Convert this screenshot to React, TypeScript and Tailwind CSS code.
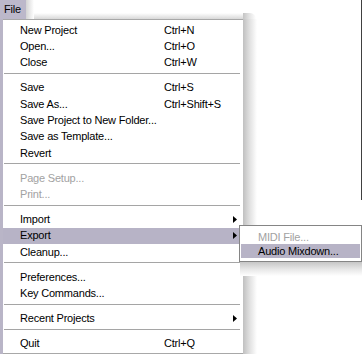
import React from "react";

type Item =
  | { sep: true }
  | { label: string; shortcut?: string; disabled?: boolean; sub?: boolean; active?: boolean };

const items: Item[] = [
  { label: "New Project", shortcut: "Ctrl+N" },
  { label: "Open...", shortcut: "Ctrl+O" },
  { label: "Close", shortcut: "Ctrl+W" },
  { sep: true },
  { label: "Save", shortcut: "Ctrl+S" },
  { label: "Save As...", shortcut: "Ctrl+Shift+S" },
  { label: "Save Project to New Folder..." },
  { label: "Save as Template..." },
  { label: "Revert" },
  { sep: true },
  { label: "Page Setup...", disabled: true },
  { label: "Print...", disabled: true },
  { sep: true },
  { label: "Import", sub: true },
  { label: "Export", sub: true, active: true },
  { label: "Cleanup..." },
  { sep: true },
  { label: "Preferences..." },
  { label: "Key Commands..." },
  { sep: true },
  { label: "Recent Projects", sub: true },
  { sep: true },
  { label: "Quit", shortcut: "Ctrl+Q" },
];

function Arrow() {
  return (
    <svg width="4" height="7" viewBox="0 0 4 7" className="block">
      <path d="M0 0 L4 3.5 L0 7 Z" fill="#000" />
    </svg>
  );
}

function MenuRow({ item }: { item: Extract<Item, { label: string }> }) {
  return (
    <div
      className={`flex h-[16.3px] items-center pl-[17px] pr-[6px] whitespace-nowrap ${
        item.active ? "bg-[#b7b3c6]" : ""
      } ${item.disabled ? "text-[#a2a2a2]" : "text-black"}`}
    >
      <span className="w-[144px]">{item.label}</span>
      {item.shortcut && <span>{item.shortcut}</span>}
      {item.sub && (
        <span className="ml-auto">
          <Arrow />
        </span>
      )}
    </div>
  );
}

export default function App() {
  return (
    <div
      className="relative flex h-[354px] w-[362px] flex-col overflow-hidden bg-white text-[11px] leading-none tracking-[-0.2px]"
      style={{ fontFamily: '"Liberation Sans", Arial, sans-serif' }}
    >
      {/* menu bar strip */}
      <div className="flex h-[19px] shrink-0">
        <div className="flex w-[26px] items-center bg-[#bcb8ca] pl-[4px] text-black">File</div>
        <div className="relative flex w-[217px] flex-col justify-end">
          <div className="absolute left-0 top-0 h-full w-[8px] bg-linear-to-r from-[#d4d4d4] to-white" />
          <div className="h-[6px] bg-linear-to-b from-white to-[#d8d8d8]" />
        </div>
        <div className="mt-[13px] h-[6px] w-[13px] rounded-tr-[7px] bg-linear-to-r from-[#c4c4c4] via-[#e4e4e4] to-white" />
        <div className="flex flex-1 justify-end">
          <div className="h-[200px] w-px bg-[#404040]" />
        </div>
      </div>

      {/* menu body */}
      <div className="flex flex-1">
        <div className="w-[3px] bg-[#b9b5c7]" />
        <div className="w-[240px] border-y border-[#a8a8a8] bg-white pt-[2px]">
          {items.map((it, i) =>
            "sep" in it ? (
              <div key={i} className="h-[8.8px] pl-[1px] pr-[3px] pt-[2px]">
                <div className="h-px bg-[#a5a5a5]" />
              </div>
            ) : (
              <MenuRow key={i} item={it} />
            )
          )}
        </div>
        <div className="w-[14px] bg-linear-to-r from-[#c0c0c0] via-[#e2e2e2] to-white" />
        <div className="flex-1" />
      </div>

      {/* export submenu */}
      <div className="absolute left-[239px] top-[225px] w-[123px] border border-[#858585] bg-white px-px pb-[3px] pt-[4px]">
        <div className="flex h-[14px] items-center pl-[17px] text-[#a2a2a2]">MIDI File...</div>
        <div className="flex h-[14px] items-center bg-[#b7b3c6] pl-[17px] text-black">Audio Mixdown...</div>
      </div>
      <div className="absolute left-[240px] top-[262px] h-[14px] w-[122px] bg-linear-to-b from-[#c6c6c6] via-[#e6e6e6] to-white" />
    </div>
  );
}
